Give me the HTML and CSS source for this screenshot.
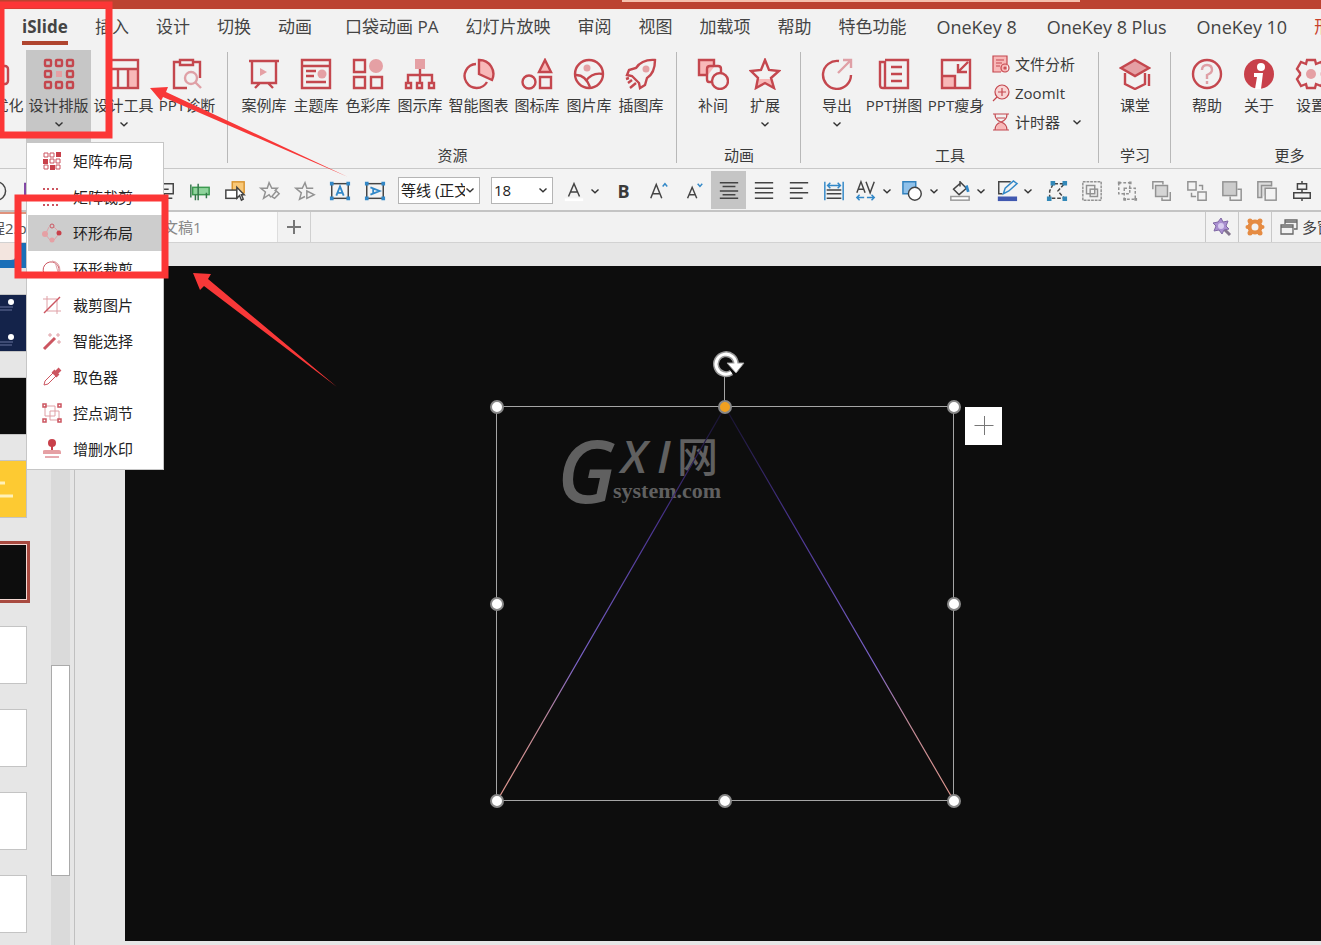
FILE: index.html
```html
<!DOCTYPE html>
<html lang="zh-CN">
<head>
<meta charset="utf-8">
<title>iSlide</title>
<link rel="stylesheet" href="styles.css">
</head>
<body>
<svg class="defs" aria-hidden="true">
  <symbol id="chev" viewBox="0 0 10 10"><path d="M1.5 3.5 5 6.8 8.500 3.500" fill="none" stroke="#333" stroke-width="1.4"/></symbol>
  <linearGradient id="edge" x1="0" y1="407" x2="0" y2="801" gradientUnits="userSpaceOnUse">
    <stop offset="0" stop-color="#16122c"/><stop offset=".3" stop-color="#4a3490"/><stop offset=".65" stop-color="#7a62c8"/><stop offset=".8" stop-color="#c08a98"/><stop offset="1" stop-color="#e0968c"/>
  </linearGradient>
</svg>

<div class="titlebar"><div class="titlebar-light"></div></div>

<nav class="tabs">
  <a href="#" class="tab current">iSlide</a><a href="#" class="tab">插入</a><a href="#" class="tab">设计</a><a href="#" class="tab">切换</a><a href="#" class="tab">动画</a><a href="#" class="tab spaced">口袋动画 PA</a><a href="#" class="tab">幻灯片放映</a><a href="#" class="tab">审阅</a><a href="#" class="tab">视图</a><a href="#" class="tab">加载项</a><a href="#" class="tab">帮助</a><a href="#" class="tab">特色功能</a><a href="#" class="tab latin">OneKey 8</a><a href="#" class="tab latin">OneKey 8 Plus</a><a href="#" class="tab latin">OneKey 10</a><a href="#" class="tab context">形状格式</a>
</nav>

<section class="ribbon">
  <div class="group first">
    <div class="tools">
      <button class="tool wide"><svg class="ico" viewBox="0 0 32 32"><rect x="3" y="8" width="27" height="18" rx="3"/></svg><span>一键优化</span></button>
      <button class="tool wide pressed"><svg class="ico" viewBox="0 0 32 32"><rect class="tint" x="13" y="13" width="6" height="6"/><g><rect x="2" y="2" width="6" height="6" rx="1"/><rect x="13" y="2" width="6" height="6" rx="1"/><rect x="24" y="2" width="6" height="6" rx="1"/><rect x="2" y="13" width="6" height="6" rx="1"/><rect x="24" y="13" width="6" height="6" rx="1"/><rect x="2" y="24" width="6" height="6" rx="1"/><rect x="13" y="24" width="6" height="6" rx="1"/><rect x="24" y="24" width="6" height="6" rx="1"/></g></svg><span>设计排版</span><svg class="chev"><use href="#chev"/></svg></button>
      <button class="tool wide"><svg class="ico" viewBox="0 0 32 32"><rect class="light" x="20" y="11" width="9" height="18"/><rect x="2" y="2" width="28" height="28"/><path d="M2 11H30M20 11V30M10 11V30"/></svg><span>设计工具</span><svg class="chev"><use href="#chev"/></svg></button>
      <button class="tool mid"><svg class="ico" viewBox="0 0 32 32"><path d="M9 4H3V30H16M22 4H29V20M9 2H22V7H9Z"/><g class="pale"><circle cx="20" cy="20" r="6"/><path d="M24.500 24.500 30 30"/></g></svg><span>PPT诊断</span></button>
    </div>
    <div class="group-name"></div>
  </div>
  <div class="sep"></div>
  <div class="group">
    <div class="tools">
      <button class="tool"><svg class="ico" viewBox="0 0 32 32"><path d="M1 3H31M4 3V25H28V3M12 25 7 30M20 25 25 30"/><path class="tint" d="M12 10 19 14 12 18Z"/></svg><span>案例库</span></button>
      <button class="tool"><svg class="ico" viewBox="0 0 32 32"><circle class="tint" cx="22" cy="16" r="4.500"/><path d="M2 2H30V30H2ZM2 8H30M6 13H16M6 18H14M6 24H26"/></svg><span>主题库</span></button>
      <button class="tool"><svg class="ico" viewBox="0 0 32 32"><circle class="tint" cx="24" cy="8" r="7"/><path d="M2 2H13V14H2ZM2 19H13V30H2ZM19 19H30V30H19Z"/></svg><span>色彩库</span></button>
      <button class="tool"><svg class="ico" viewBox="0 0 32 32"><rect class="tint" x="11" y="1" width="10" height="10"/><path d="M16 11V24M4 24V17H28V24M2 25H7V30H2ZM13 25H18V30H13ZM25 25H30V30H25Z"/></svg><span>图示库</span></button>
      <button class="tool wide"><svg class="ico" viewBox="0 0 32 32"><path class="light" d="M16 2A14 14 0 0 1 29 22L16 16Z"/><path d="M13 6A12 12 0 1 0 24 24M16 2A14 14 0 0 1 29 22L16 16Z"/></svg><span>智能图表</span></button>
      <button class="tool"><svg class="ico" viewBox="0 0 32 32"><path class="light" d="M24 2 30 14H18Z"/><path d="M24 2 30 14H18ZM19 19H30V30H19Z"/><circle cx="8" cy="24" r="6.500"/></svg><span>图标库</span></button>
      <button class="tool"><svg class="ico" viewBox="0 0 32 32"><circle class="tint" cx="14" cy="10" r="3.500"/><circle cx="16" cy="16" r="14"/><path d="M2 17Q12 16 17 29M30 16Q19 14 13 23"/></svg><span>图片库</span></button>
      <button class="tool"><svg class="ico" viewBox="0 0 32 32"><circle class="tint" cx="21" cy="11" r="3.500"/><path d="M30 2Q17 1 11 10L4 12 2 17 7 18 14 25 15 30 20 27 22 20Q30 15 30 2ZM7 22 3 25M11 25 5 30M4 20 1 21"/></svg><span>插图库</span></button>
    </div>
    <div class="group-name">资源</div>
  </div>
  <div class="sep"></div>
  <div class="group">
    <div class="tools">
      <button class="tool"><svg class="ico" viewBox="0 0 32 32"><path class="light" d="M2 2H17V9L11 17H2Z"/><path d="M17 8V2H2V17H10M15 24H12Q10 24 10 21V11Q10 8 13 8H21Q24 8 24 11V15"/><circle cx="23" cy="23" r="8"/></svg><span>补间</span></button>
      <button class="tool"><svg class="ico" viewBox="0 0 32 32"><path class="light" d="M8 21H24L25 30 16 26 7 30Z"/><path d="M16 2 20 12 30 13 22 20 25 30 16 25 7 30 9 20 2 13 12 12Z"/></svg><span>扩展</span><svg class="chev"><use href="#chev"/></svg></button>
    </div>
    <div class="group-name">动画</div>
  </div>
  <div class="sep"></div>
  <div class="group">
    <div class="tools">
      <button class="tool"><svg class="ico" viewBox="0 0 32 32"><path d="M18 3A14 14 0 1 0 30 17"/><path class="pale" d="M17 15 30 2M22 2H30V10"/></svg><span>导出</span><svg class="chev"><use href="#chev"/></svg></button>
      <button class="tool mid"><svg class="ico" viewBox="0 0 32 32"><path d="M7 2H30V30H5Q2 30 2 27V4H7V29M13 9H24M13 16H24M13 23H24"/></svg><span>PPT拼图</span></button>
      <button class="tool mid"><svg class="ico" viewBox="0 0 32 32"><path class="light" d="M2 18H15V30H2Z"/><path d="M2 2H30V30H2ZM2 18H15V30M28 4 18 14M18 6V14H27"/></svg><span>PPT瘦身</span></button>
      <div class="stack">
        <button class="row"><svg class="ico-s" viewBox="0 0 18 18"><path class="light" d="M1 1H15V17H1Z"/><path d="M9 17H1V1H15V9M4 5H12M4 8H10M4 11H8"/><circle cx="13" cy="13" r="4"/><circle cx="13" cy="13" r="1"/></svg>文件分析</button>
        <button class="row"><svg class="ico-s" viewBox="0 0 18 18"><circle class="blush" cx="10" cy="8" r="7"/><path d="M5 13 1 17M10 4V12M6 8H14"/></svg>ZoomIt</button>
        <button class="row"><svg class="ico-s" viewBox="0 0 18 18"><path class="light" d="M4 17Q4 11 9 9Q14 11 14 17Z"/><path d="M1 1H17M1 17H17M3 1Q3 7 9 9Q15 11 15 17M15 1Q15 7 9 9Q3 11 3 17M5 5H13"/></svg>计时器<svg class="chev end"><use href="#chev"/></svg></button>
      </div>
    </div>
    <div class="group-name">工具</div>
  </div>
  <div class="sep"></div>
  <div class="group">
    <div class="tools">
      <button class="tool"><svg class="ico" viewBox="0 0 32 32"><path class="tint" d="M16 2 30 10 16 18 2 10Z"/><path d="M16 2 30 10 16 18 2 10ZM6 15V26L16 31 26 26V15M30 16V28"/></svg><span>课堂</span></button>
    </div>
    <div class="group-name">学习</div>
  </div>
  <div class="sep"></div>
  <div class="group last">
    <div class="tools">
      <button class="tool"><svg class="ico" viewBox="0 0 32 32"><circle cx="16" cy="16" r="14"/><path class="pale" d="M11 12Q11 7 16 7T21 12Q21 15 16 17V21M16 23V26"/></svg><span>帮助</span></button>
      <button class="tool"><svg class="ico" viewBox="0 0 32 32"><circle class="solid" cx="16" cy="16" r="15"/><circle class="white" cx="18" cy="9" r="4"/><path class="white" d="M11 15H20L18 31H12L14 19H11Z"/></svg><span>关于</span></button>
      <button class="tool"><svg class="ico" viewBox="0 0 32 32"><circle class="tint" cx="16" cy="16" r="5"/><path d="M12 2H20L21 6 26 4 30 11 27 15V17L30 21 26 28 21 26 20 30H12L11 26 6 28 2 21 5 17V15L2 11 6 4 11 6Z"/></svg><span>设置</span></button>
    </div>
    <div class="group-name">更多</div>
  </div>
</section>

<section class="quickbar">
  <button class="q" aria-label="圆形"><svg viewBox="0 0 24 24"><circle cx="19" cy="12" r="10"/></svg></button>
  <button class="q" aria-label="主题"><svg viewBox="0 0 24 24"><path d="M22 4H12V19H22" stroke="#7a3aa0" stroke-width="2"/></svg></button>
  <button class="q after-menu" aria-label="放映"><svg viewBox="0 0 24 24"><path d="M2 4H21V15H2M16 20H20M11 10H16M11 15V20H19"/></svg></button>
  <button class="q" aria-label="对齐"><svg viewBox="0 0 24 24"><rect x="4" y="8" width="18" height="8" fill="#8fd49c" stroke="#3c9a50"/><path d="M2 5V19M7 16V22M10 4V22M19 14V20" stroke="#33764a"/></svg></button>
  <button class="q" aria-label="选择"><svg viewBox="0 0 24 24"><rect x="9" y="2" width="13" height="12" fill="#f9c877" stroke="#d99430"/><rect x="2" y="11" width="12" height="9" fill="#fff"/><path d="M14 8V20L17 17 19 22 21 21 19 16H22Z" fill="#fff"/></svg></button>
  <button class="q" aria-label="动画刷"><svg class="gray" viewBox="0 0 24 24"><path d="M13 19 11 16 5 20 7 13 2 9H9L11 3 14 9H20L17 12"/><path d="M14 18 19 12 22 15 17 20Z"/></svg></button>
  <button class="q" aria-label="动画预览"><svg class="gray" viewBox="0 0 24 24"><path d="M12 18 6 21 8 14 2 9H9L12 3 14 9H21"/><path d="M14 12 22 16 14 20Z"/></svg></button>
  <button class="q" aria-label="横排文本框"><svg viewBox="0 0 24 24"><rect x="3" y="4" width="18" height="16"/><g class="blue"><path d="M1 2H5V6H1ZM19 2H23V6H19ZM1 18H5V22H1ZM19 18H23V22H19Z" fill="#3288c8" stroke="none"/><path d="M8 17 12 7 16 17M9.500 14H14.500" stroke-width="2"/></g></svg></button>
  <button class="q" aria-label="竖排文本框"><svg viewBox="0 0 24 24"><rect x="3" y="4" width="18" height="16"/><g class="blue"><path d="M1 2H5V6H1ZM19 2H23V6H19ZM1 18H5V22H1ZM19 18H23V22H19Z" fill="#3288c8" stroke="none"/><path d="M7 8 17 12 7 16M10 9.500V14.500" stroke-width="2"/></g></svg></button>
  <label class="pick font"><select aria-label="字体"><option>等线 (正文)</option></select><svg class="chev"><use href="#chev"/></svg></label>
  <label class="pick size"><select aria-label="字号"><option>18</option></select><svg class="chev"><use href="#chev"/></svg></label>
  <button class="q split" aria-label="字体颜色"><svg viewBox="0 0 24 24"><rect x="2" y="20" width="20" height="3" fill="#fff" stroke="none"/><path d="M6 18 12 4 18 18M8 13H16"/></svg><svg class="chev"><use href="#chev"/></svg></button>
  <button class="q" aria-label="加粗"><b>B</b></button>
  <button class="q" aria-label="增大字号"><svg viewBox="0 0 24 24"><path d="M3 20 9 5 15 20M5 15H13"/><path class="blue" d="M16 7 18.500 4 21 7"/></svg></button>
  <button class="q" aria-label="减小字号"><svg viewBox="0 0 24 24"><path d="M5 20 10 8 15 20M7 16H13"/><path class="blue" d="M16 4 18.500 7 21 4"/></svg></button>
  <button class="q on" aria-label="居中"><svg viewBox="0 0 24 24"><path d="M2 3H22M5 7H19M2 12H22M5 16H19M2 20H22"/></svg></button>
  <button class="q" aria-label="两端对齐"><svg viewBox="0 0 24 24"><path d="M2 3H22M2 9H22M2 14H22M2 20H22"/></svg></button>
  <button class="q" aria-label="左对齐"><svg viewBox="0 0 24 24"><path d="M2 3H22M2 9H16M2 14H22M2 20H16"/></svg></button>
  <button class="q" aria-label="分散对齐"><svg viewBox="0 0 24 24"><path d="M4 11H20M4 15H20M4 20H20"/><path class="blue" d="M2 2V22M22 2V22M5 6H19M8 3 5 6 8 9M16 3 19 6 16 9"/></svg></button>
  <button class="q split" aria-label="字符间距"><svg viewBox="0 0 24 24"><path d="M2 14 6.500 2 11 14M3.500 10H9.500M12 2 16.500 14 21 2"/><path class="blue" d="M2 19H10M5 16 2 19 5 22M13 19H21M18 16 21 19 18 22"/></svg><svg class="chev"><use href="#chev"/></svg></button>
  <button class="q split" aria-label="形状"><svg viewBox="0 0 24 24"><path d="M1 2H15V15H1Z" fill="#8fc1ea" stroke="#3282be"/><circle cx="14" cy="15" r="7" fill="#fff"/></svg><svg class="chev"><use href="#chev"/></svg></button>
  <button class="q split" aria-label="填充"><svg viewBox="0 0 24 24"><path d="M5 10 13 3 19 9 11 16ZM12 7V1"/><path d="M19 6 21 13" class="blue" stroke-width="3"/><rect x="2" y="18" width="20" height="4" fill="#fff" stroke="#999"/></svg><svg class="chev"><use href="#chev"/></svg></button>
  <button class="q split" aria-label="轮廓"><svg viewBox="0 0 24 24"><path d="M16 2H3V15H7"/><path class="blue" d="M8 15 10 9 19 1 23 4 14 12Z"/><rect x="2" y="18" width="21" height="5" fill="#4058b0" stroke="none"/></svg><svg class="chev"><use href="#chev"/></svg></button>
  <button class="q" aria-label="编辑顶点"><svg viewBox="0 0 24 24"><path d="M4 20V12L8 4H20L13 12 20 20Z" stroke-dasharray="4 2"/><path d="M5 1H10V6H5ZM18 1H23V6H18ZM1 18H6V23H1ZM18 18H23V23H18Z" fill="#3288b8" stroke="none"/></svg></button>
  <button class="q" aria-label="组合"><svg class="gray" viewBox="0 0 24 24"><path d="M2 2H22V22H2Z" stroke-dasharray="3 1"/><rect x="6" y="6" width="9" height="9"/><rect x="10" y="10" width="8" height="8"/></svg></button>
  <button class="q" aria-label="取消组合"><svg class="gray" viewBox="0 0 24 24"><path d="M3 3H15V15H3ZM9 9H21V21H9Z" stroke-dasharray="3 2"/><path d="M2 3H5M14 3H17M8 21H11M20 21H23" stroke-width="3"/></svg></button>
  <button class="q" aria-label="上移一层"><svg class="gray" viewBox="0 0 24 24"><path d="M2 10V2H13V5M21 13V22H12V19"/><rect x="5" y="6" width="13" height="12" fill="#d5d5d5"/></svg></button>
  <button class="q" aria-label="下移一层"><svg class="gray" viewBox="0 0 24 24"><path d="M2 2H11V11H2ZM13 13H22V22H13ZM14 6H18V11M6 14V18H11"/></svg></button>
  <button class="q" aria-label="置于顶层"><svg class="gray" viewBox="0 0 24 24"><path d="M18 10H22V22H10V18"/><rect x="2" y="2" width="15" height="15" fill="#ccc"/></svg></button>
  <button class="q" aria-label="置于底层"><svg class="gray" viewBox="0 0 24 24"><path d="M7 19H2V2H17V7M6 19V6H17" fill="#ddd"/><rect x="10" y="9" width="12" height="13" fill="#f3f3f3"/></svg></button>
  <button class="q" aria-label="居中分布"><svg viewBox="0 0 24 24"><path d="M12 1V4M12 10V14M12 20V23M7 4H17V10H7ZM3 14H21V20H3Z"/></svg></button>
</section>

<section class="docs">
  <button class="doc active">程2.pptx</button>
  <button class="doc second">演示文稿1</button>
  <button class="add" aria-label="新建"><svg viewBox="0 0 16 16"><path d="M8 1V15M1 8H15"/></svg></button>
  <div class="fill"></div>
  <button class="side" aria-label="魔棒"><svg viewBox="0 0 20 20"><path d="M12 12 18 18" stroke="#82748c" stroke-width="3"/><path d="M9 1 11 5 16 4 14 9 17 12 12 13 10 17 7 13 2 14 4 9 1 6 6 5Z" fill="#a98fd0" stroke="#8068a5"/><circle cx="9" cy="9" r="3" fill="#d9cdf0"/></svg></button>
  <button class="side" aria-label="设置"><svg viewBox="0 0 20 20"><circle cx="10" cy="10" r="5.500" fill="none" stroke="#e58b42" stroke-width="4"/><g fill="#e58b42"><circle cx="5" cy="4" r="2.500"/><circle cx="15" cy="4" r="2.500"/><circle cx="2.500" cy="10" r="2"/><circle cx="17.500" cy="10" r="2"/><circle cx="5" cy="16" r="2.500"/><circle cx="15" cy="16" r="2.500"/></g></svg></button>
  <button class="side multi"><svg viewBox="0 0 20 20"><path d="M2 8H14V17H2ZM6 7V3H18V12H15M2 10H14M6 5H18" fill="none" stroke="#666" stroke-width="1.300"/></svg>多窗口</button>
</section>

<main class="work">
  <aside class="slides">
    <div class="thumbs">
      <div class="thumb blue"><i></i></div>
      <div class="thumb navy"><svg viewBox="0 0 26 56"><g fill="#fff"><circle cx="11" cy="7" r="3"/><circle cx="11" cy="42" r="3"/></g><path d="M0 12H13M0 15H12M0 47H13M0 50H12" stroke="#66729c"/></svg></div>
      <div class="thumb black"></div>
      <div class="thumb yellow"><svg viewBox="0 0 26 56"><path d="M0 22H5M0 35H13" stroke="#fff1b8" stroke-width="3"/></svg></div>
      <div class="thumb black chosen"></div>
      <div class="thumb"></div><div class="thumb"></div><div class="thumb"></div><div class="thumb"></div>
    </div>
    <div class="track"><div class="grip"></div></div>
  </aside>
  <div class="stage">
    <svg class="drawing" viewBox="125 266 1196 675" preserveAspectRatio="xMinYMin slice">
      <g fill="#606060">
        <text class="wm-g" x="557" y="503">G</text>
        <text class="wm-x" x="621" y="473">X</text>
        <text class="wm-x" x="657" y="473">I</text>
        <text class="wm-cn" x="677" y="472">网</text>
        <text class="wm-s" x="613" y="498">system.com</text>
      </g>
      <path d="M497 801 725 407 954 801" fill="none" stroke="url(#edge)" stroke-width="1.200"/>
      <path d="M496.500 406.500H953.500V800.500H496.500ZM724.500 406V376" fill="none" stroke="#a5a5a5"/>
      <g fill="#fff" stroke="#888" stroke-width="2"><circle cx="497" cy="407" r="6"/><circle cx="954" cy="407" r="6"/><circle cx="497" cy="604" r="6"/><circle cx="954" cy="604" r="6"/><circle cx="497" cy="801" r="6"/><circle cx="725" cy="801" r="6"/><circle cx="954" cy="801" r="6"/><circle cx="725" cy="407" r="6" fill="#f0a020"/></g>
      <g fill="none"><path d="M731.500 372.500A10 10 0 1 1 736 364" stroke="#999" stroke-width="6"/><path d="M727 363H744L736 373Z" fill="#fff" stroke="#999"/><path d="M731.500 372.500A10 10 0 1 1 736 364" stroke="#fff" stroke-width="3"/></g>
      <rect x="965" y="407" width="37" height="38" fill="#fff"/><path d="M974.500 425.500H993.500M984.500 416V435" stroke="#777"/>
    </svg>
  </div>
</main>

<ul class="menu">
  <li><button><svg viewBox="0 0 20 20"><path d="M2 2H6V6H2ZM8 2H12V6H8ZM2 14H6V18H2ZM14 8H18V12H14ZM8 8H12V12H8ZM14 14H18V18H14Z"/><path class="solid" d="M14 1H19V6H14ZM1 8H6V13H1ZM8 14H13V19H8Z"/></svg>矩阵布局</button></li>
  <li><button><svg viewBox="0 0 20 20"><path d="M1 2H19M1 10H19M1 18H19" stroke-width="2" stroke-dasharray="2 2 2 3"/></svg>矩阵裁剪</button></li>
  <li><button class="hover"><svg viewBox="0 0 20 20"><path d="M4 10 7 4M12 4 16 8M4 12 8 17M12 17 16 12" class="pale"/><circle cx="10" cy="3" r="2"/><circle class="solid" cx="17" cy="10" r="2.500"/><circle class="tint" cx="3" cy="11" r="3"/><circle class="tint" cx="10" cy="17" r="2.500"/></svg>环形布局</button></li>
  <li><button><svg viewBox="0 0 20 20"><path d="M4 17A8 8 0 1 1 16 15"/><path class="pale" d="M10 2Q18 3 18 12M13 3 17 16"/></svg>环形裁剪</button></li>
  <li><button><svg viewBox="0 0 20 20"><path class="pale" d="M5 1V16H19M1 4H15V19"/><path d="M2 18 18 2" stroke-width="1.500"/></svg>裁剪图片</button></li>
  <li><button><svg viewBox="0 0 20 20"><path d="M2 18 13 7" stroke-width="3"/><path class="pale" d="M8 2V6M6 4H10M16 2V6M14 4H18M17 9V13M15 11H19"/></svg>智能选择</button></li>
  <li><button><svg viewBox="0 0 20 20"><path d="M2 18 3 14 12 5 15 8 6 17Z"/><path d="M11 4 16 9M14 6 18 2" stroke-width="4"/></svg>取色器</button></li>
  <li><button><svg viewBox="0 0 20 20"><path class="pale" d="M3 3H13V13H3ZM8 8H17V17H8Z"/><path d="M1 1H4V4H1ZM16 1H19V4H16ZM1 16H4V19H1ZM16 16H19V19H16Z" stroke-width="1.500"/></svg>控点调节</button></li>
  <li><button><svg viewBox="0 0 20 20"><circle class="solid" cx="10" cy="4" r="4"/><path class="solid" d="M9 7H11V11H9Z"/><path class="tint" d="M1 12Q1 11 3 11H17Q19 11 19 13V15H1Z"/><path d="M3 18H17"/></svg>增删水印</button></li>
</ul>

<svg class="marks" viewBox="0 0 400 400" aria-hidden="true">
  <rect x="1" y="5" width="108" height="130" fill="none" stroke="#fc3636" stroke-width="7"/>
  <rect x="18" y="198" width="147" height="77" fill="none" stroke="#fc3636" stroke-width="7"/>
  <path d="M150 88 168 87 166 92 348 177 163 97 161 101ZM193 273 211 274 208 279 337 387 204 286 200 290Z" fill="#f83838"/>
</svg>
</body>
</html>
```
FILE: styles.css
```css
* { box-sizing: border-box; }
html { height: 100%; overflow: hidden; }
body {
  margin: 0; height: 100%; display: flex; flex-direction: column; position: relative;
  overflow: hidden; background: #e6e6e6; color: #3a3a3a;
  font: 15px/22px "Open Sans", "Noto Sans CJK SC", sans-serif;
}
button, select { font: inherit; color: inherit; border: 0; background: none; padding: 0; margin: 0; }
svg { display: block; flex: none; }
.defs { position: absolute; width: 0; height: 0; }
.chev { width: 10px; height: 10px; }

.titlebar { height: 9px; flex: none; background: #bc4330; padding-left: 622px; }
.titlebar-light { width: 458px; height: 2px; background: #f5c0ac; }

.tabs {
  display: flex; flex: none; height: 39px; padding: 5px 0 3px 22px; gap: 27px; white-space: nowrap;
  overflow: hidden; background: #f2f2f2; border-top: 1px solid #f7ece6; font-size: 17px; line-height: 24px;
}
.tab { color: #444; text-decoration: none; flex: none; }
.tab.current { font-weight: 700; width: 46px; border-bottom: 4px solid #b0452f; }
.tab.spaced { margin-left: 6px; }
.tab.latin { margin-left: 3px; font-size: 18px; }
.tab.context { color: #c8402c; }

.ribbon {
  display: flex; flex: none; height: 121px; padding-top: 2px; overflow: hidden;
  background: #f2f2f2; border-bottom: 1px solid #c8c8c8; white-space: nowrap;
}
.group { flex: none; display: flex; flex-direction: column; padding: 0 9px 0 10px; }
.group.first { margin-left: -39px; padding-left: 0; }
.group.last { min-width: 236px; }
.group-name { text-align: center; line-height: 24px; padding-top: 1px; }
.sep { flex: none; width: 1px; margin: 2px 0 5px; background: #b8b8b8; }
.tools { display: flex; height: 92px; }
.tool { width: 52px; padding-top: 8px; display: flex; flex-direction: column; align-items: center; gap: 4px; }
.tool.wide { width: 65px; }
.tool.mid { width: 62px; }
.tool.pressed { background: #c6c6c6; }
.tool .chev { margin-top: -1px; }
.ico { width: 32px; height: 32px; fill: none; stroke: #c4474e; stroke-width: 2.4; }
.ico-s { width: 18px; height: 18px; fill: none; stroke: #c4474e; stroke-width: 1.2; }
.tint { fill: #e5a0a4; stroke: none; }
.light { fill: #f8b8b8; stroke: none; }
.blush { fill: #f8d4d4; }
.pale { stroke: #dfa0a6; fill: none; }
.solid { fill: #c8404a; stroke: none; }
.white { fill: #fff; stroke: none; }
.stack { width: 102px; padding-left: 5px; }
.row { display: flex; align-items: center; gap: 5px; width: 100%; height: 29px; padding-bottom: 2px; }
.chev.end { margin-left: 7px; }

.quickbar {
  display: flex; flex: none; align-items: center; height: 43px; padding-top: 1px; overflow: hidden;
  background: #f3f3f3; border-bottom: 2px solid #c4c4c4;
}
.q { flex: none; width: 35px; height: 38px; display: flex; align-items: center; justify-content: center; padding-top: 2px; }
.q:first-child { margin-left: -28px; }
.q.after-menu { margin-left: 105px; }
.q svg:not(.chev) { width: 22px; height: 22px; fill: none; stroke: #444; stroke-width: 1.6; overflow: visible; }
.q svg.gray { stroke: #929292; }
.q .blue { stroke: #3288c8; }
.q b { font-size: 18px; }
.q.on { background: #c5c5c5; }
.q.split { width: 47px; justify-content: flex-start; padding-left: 4px; gap: 5px; }
.pick { display: grid; grid-template-columns: 1fr 14px; align-items: center; height: 27px; flex: none; border: 1px solid #b5b5b5; background: #fff; }
.pick.font { width: 82px; margin-left: 6px; }
.pick.size { width: 62px; margin: 0 6px 0 11px; }
.pick select { grid-area: 1 / 1; appearance: none; width: 100%; height: 25px; padding-left: 2px; overflow: hidden; outline: 0; color: #222; }
.pick .chev { grid-area: 1 / 2; pointer-events: none; }

.docs { display: flex; flex: none; height: 31px; background: #f2f2f2; border-bottom: 1px solid #d2d2d2; overflow: hidden; }
.docs button { flex: none; display: flex; align-items: center; white-space: nowrap; }
.docs .doc { width: 139px; border-right: 1px solid #ddd; background: #fafafa; color: #888; }
.docs .active { border-top: 2px solid #e0927c; background: #fff; color: #555; text-indent: -10px; }
.docs .second { text-indent: -6px; }
.docs .add { width: 33px; justify-content: center; border-right: 1px solid #d0d0d0; }
.add svg { width: 16px; height: 16px; stroke: #777; stroke-width: 2; }
.fill { flex: 1; min-width: 0; }
.docs .side { width: 33px; justify-content: center; border-left: 1px solid #c8c8c8; color: #444; }
.docs .multi { width: 50px; justify-content: flex-start; padding-left: 7px; gap: 3px; overflow: hidden; }
.side svg { width: 20px; height: 20px; }

.work { flex: 1; min-height: 0; display: flex; }
.slides { width: 75px; flex: none; display: flex; justify-content: space-between; overflow: hidden; border-right: 1px solid #c0c0c0; padding-right: 4px; }
.thumbs { width: 31px; margin-top: -31px; display: flex; flex-direction: column; gap: 27px; }
.thumb { width: 26px; height: 56px; flex: none; background: #fff; outline: 1px solid #c4c4c4; }
.thumb svg { width: 26px; height: 56px; }
.thumb.blue { background: #1a6fb8; outline: 0; padding-top: 31px; }
.thumb.blue i { display: block; width: 19px; height: 17px; background: #f3e5df; border-right: 2px solid #c9a79c; border-radius: 0 0 8px 0; }
.thumb.navy { background: #14234a; }
.thumb.black { background: #0d0d0d; }
.thumb.yellow { background: #fdca32; }
.thumb.chosen { width: 27px; outline: 3px solid #a84a40; border: 1px solid #f3d8d2; border-left: 0; }
.track { width: 19px; background: #dadada; padding-top: 422px; }
.grip { height: 211px; background: #fff; border: 1px solid #aaa; }
.stage { flex: 1; min-width: 0; padding: 23px 0 4px 50px; display: flex; }
.drawing { flex: 1; min-width: 0; background: #0d0d0d; width: 100%; height: 100%; }
.wm-g { font: italic 600 86px "Open Sans", sans-serif; }
.wm-x { font: italic 600 46px "Open Sans", sans-serif; }
.wm-cn { font: 500 41px "Noto Sans CJK SC", sans-serif; }
.wm-s { font: bold 22px "Liberation Serif", serif; }

.menu {
  position: absolute; left: 26px; top: 142px; width: 138px; margin: 0; padding: 0 1px 2px; list-style: none;
  background: #fff; border: 1px solid #c6c6c6; color: #222;
}
.menu button { width: 100%; height: 36px; display: flex; align-items: center; gap: 11px; padding-left: 14px; }
.menu .hover { background: #cdcdcd; }
.menu svg { width: 20px; height: 20px; fill: none; stroke: #cc5560; stroke-width: 1; }
.marks { position: absolute; left: 0; top: 0; width: 400px; height: 400px; pointer-events: none; }
```
